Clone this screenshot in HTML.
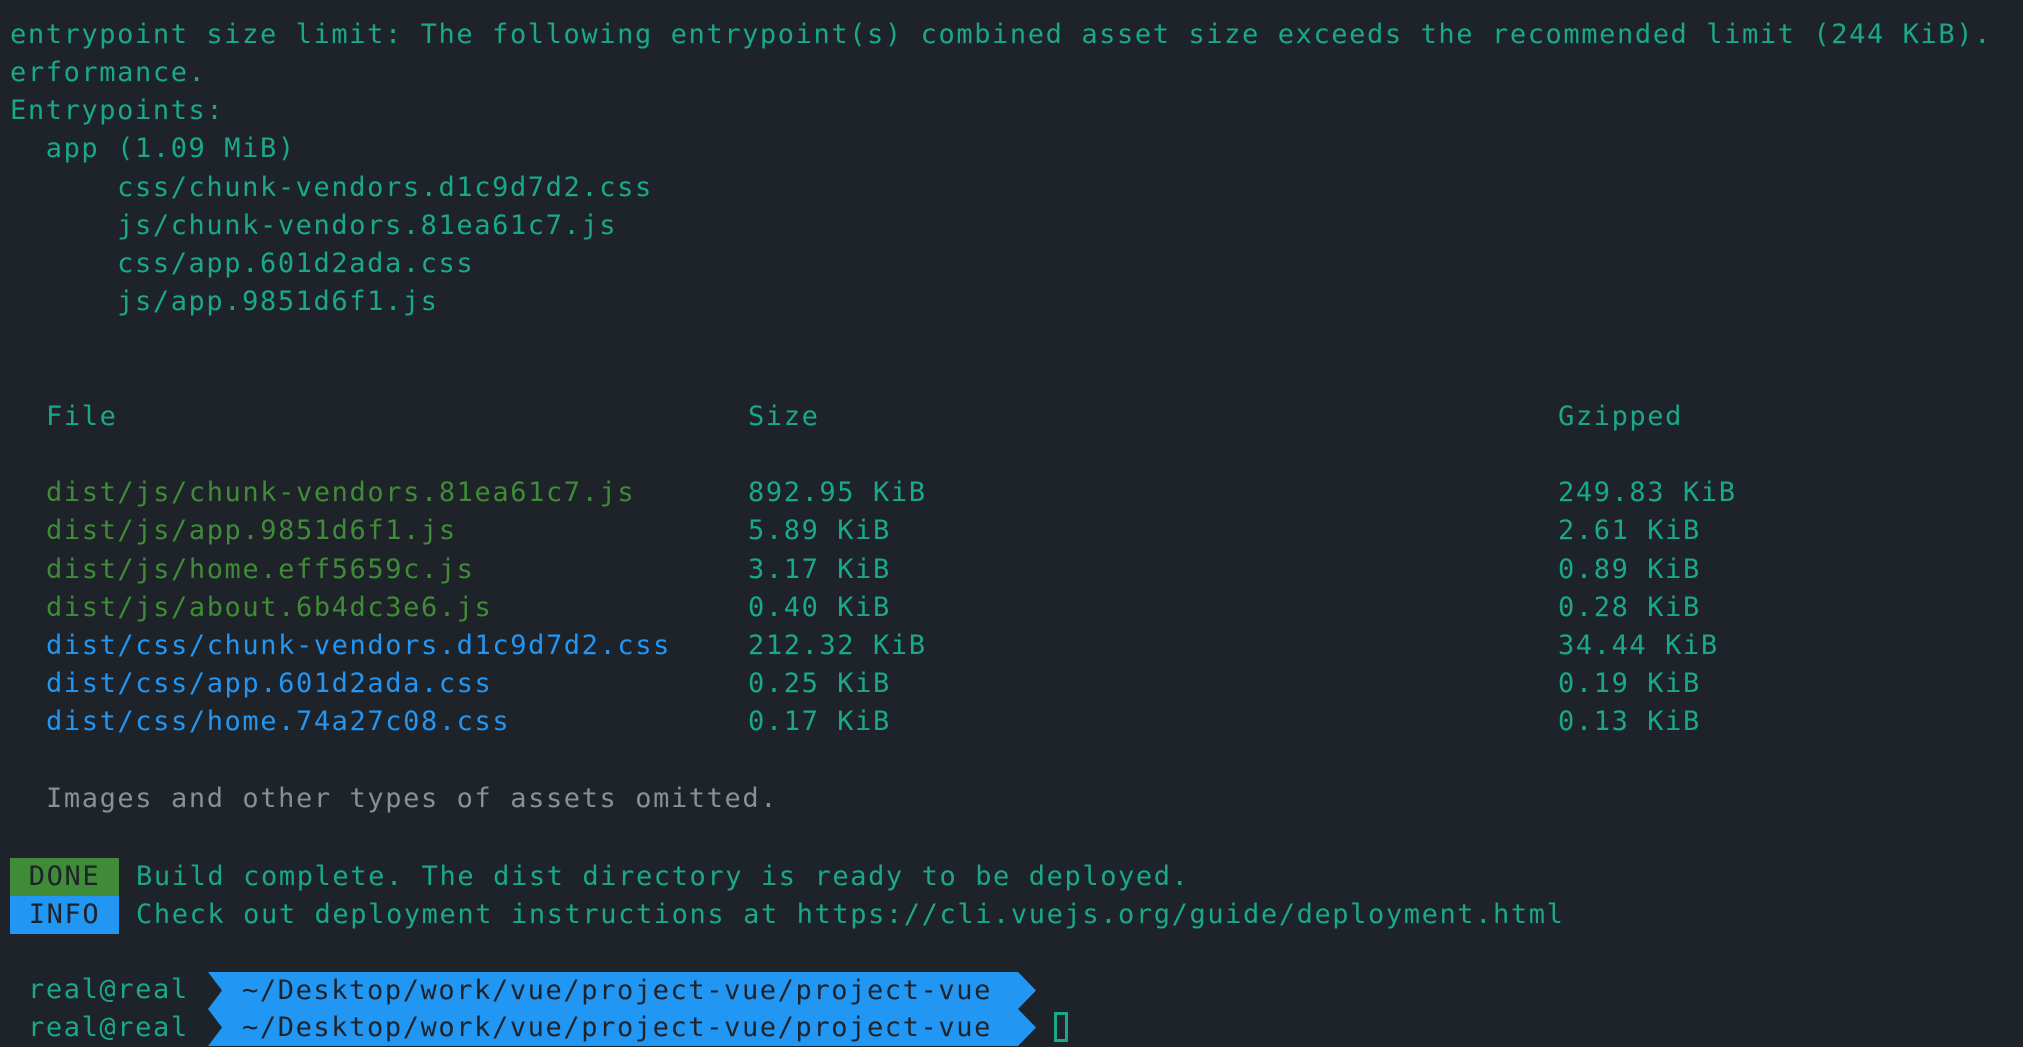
<!DOCTYPE html>
<html><head><meta charset="utf-8"><style>
html,body{margin:0;padding:0;background:#1e2229;}
body{width:2023px;height:1019px;position:relative;overflow:hidden;font-family:"DejaVu Sans Mono","Liberation Mono",monospace;font-size:27px;letter-spacing:1.6px;}
.l{position:absolute;white-space:pre;line-height:38.2px;height:38.2px;color:#19a98a;}
.g{color:#3f8b37}.b{color:#2196f3}.gr{color:#8a9090}
.badge{position:absolute;left:10px;width:109px;height:38px;color:#1e2229;text-align:center;line-height:38px;}
.bar{position:absolute;left:208px;height:37px;width:828px;background:#2196f3;clip-path:polygon(0 0,810px 0,828px 50%,810px 100%,0 100%,14px 50%);color:#1e2229;line-height:37px;white-space:pre;}
</style></head><body>
<div class="l" style="left:10px;top:15.7px">entrypoint size limit: The following entrypoint(s) combined asset size exceeds the recommended limit (244 KiB).</div>
<div class="l" style="left:10px;top:53.9px">erformance.</div>
<div class="l" style="left:10px;top:92.1px">Entrypoints:</div>
<div class="l" style="left:10px;top:130.3px">  app (1.09 MiB)</div>
<div class="l" style="left:10px;top:168.5px">      css/chunk-vendors.d1c9d7d2.css</div>
<div class="l" style="left:10px;top:206.7px">      js/chunk-vendors.81ea61c7.js</div>
<div class="l" style="left:10px;top:244.9px">      css/app.601d2ada.css</div>
<div class="l" style="left:10px;top:283.1px">      js/app.9851d6f1.js</div>

<div class="l" style="left:46px;top:397.7px">File</div>
<div class="l" style="left:748px;top:397.7px">Size</div>
<div class="l" style="left:1558px;top:397.7px">Gzipped</div>

<div class="l g" style="left:46px;top:474.1px">dist/js/chunk-vendors.81ea61c7.js</div>
<div class="l g" style="left:46px;top:512.3px">dist/js/app.9851d6f1.js</div>
<div class="l g" style="left:46px;top:550.5px">dist/js/home.eff5659c.js</div>
<div class="l g" style="left:46px;top:588.7px">dist/js/about.6b4dc3e6.js</div>
<div class="l b" style="left:46px;top:626.9px">dist/css/chunk-vendors.d1c9d7d2.css</div>
<div class="l b" style="left:46px;top:665.1px">dist/css/app.601d2ada.css</div>
<div class="l b" style="left:46px;top:703.3px">dist/css/home.74a27c08.css</div>

<div class="l" style="left:748px;top:474.1px">892.95 KiB</div>
<div class="l" style="left:748px;top:512.3px">5.89 KiB</div>
<div class="l" style="left:748px;top:550.5px">3.17 KiB</div>
<div class="l" style="left:748px;top:588.7px">0.40 KiB</div>
<div class="l" style="left:748px;top:626.9px">212.32 KiB</div>
<div class="l" style="left:748px;top:665.1px">0.25 KiB</div>
<div class="l" style="left:748px;top:703.3px">0.17 KiB</div>

<div class="l" style="left:1558px;top:474.1px">249.83 KiB</div>
<div class="l" style="left:1558px;top:512.3px">2.61 KiB</div>
<div class="l" style="left:1558px;top:550.5px">0.89 KiB</div>
<div class="l" style="left:1558px;top:588.7px">0.28 KiB</div>
<div class="l" style="left:1558px;top:626.9px">34.44 KiB</div>
<div class="l" style="left:1558px;top:665.1px">0.19 KiB</div>
<div class="l" style="left:1558px;top:703.3px">0.13 KiB</div>

<div class="l gr" style="left:46px;top:779.7px">Images and other types of assets omitted.</div>

<div class="badge" style="top:858px;background:#3f8b37">DONE</div>
<div class="badge" style="top:896px;background:#2196f3">INFO</div>
<div class="l" style="left:136px;top:857.9px">Build complete. The dist directory is ready to be deployed.</div>
<div class="l" style="left:136px;top:896.1px">Check out deployment instructions at https://cli.vuejs.org/guide/deployment.html</div>

<div class="l" style="left:28px;top:971px">real@real</div>
<div class="bar" style="top:972px"><span style="padding-left:34px">~/Desktop/work/vue/project-vue/project-vue</span></div>
<div class="l" style="left:28px;top:1009px">real@real</div>
<div class="bar" style="top:1009px"><span style="padding-left:34px">~/Desktop/work/vue/project-vue/project-vue</span></div>
<div style="position:absolute;left:1054px;top:1012px;width:14px;height:30px;border:3px solid #19a98a;box-sizing:border-box"></div>
</body></html>
